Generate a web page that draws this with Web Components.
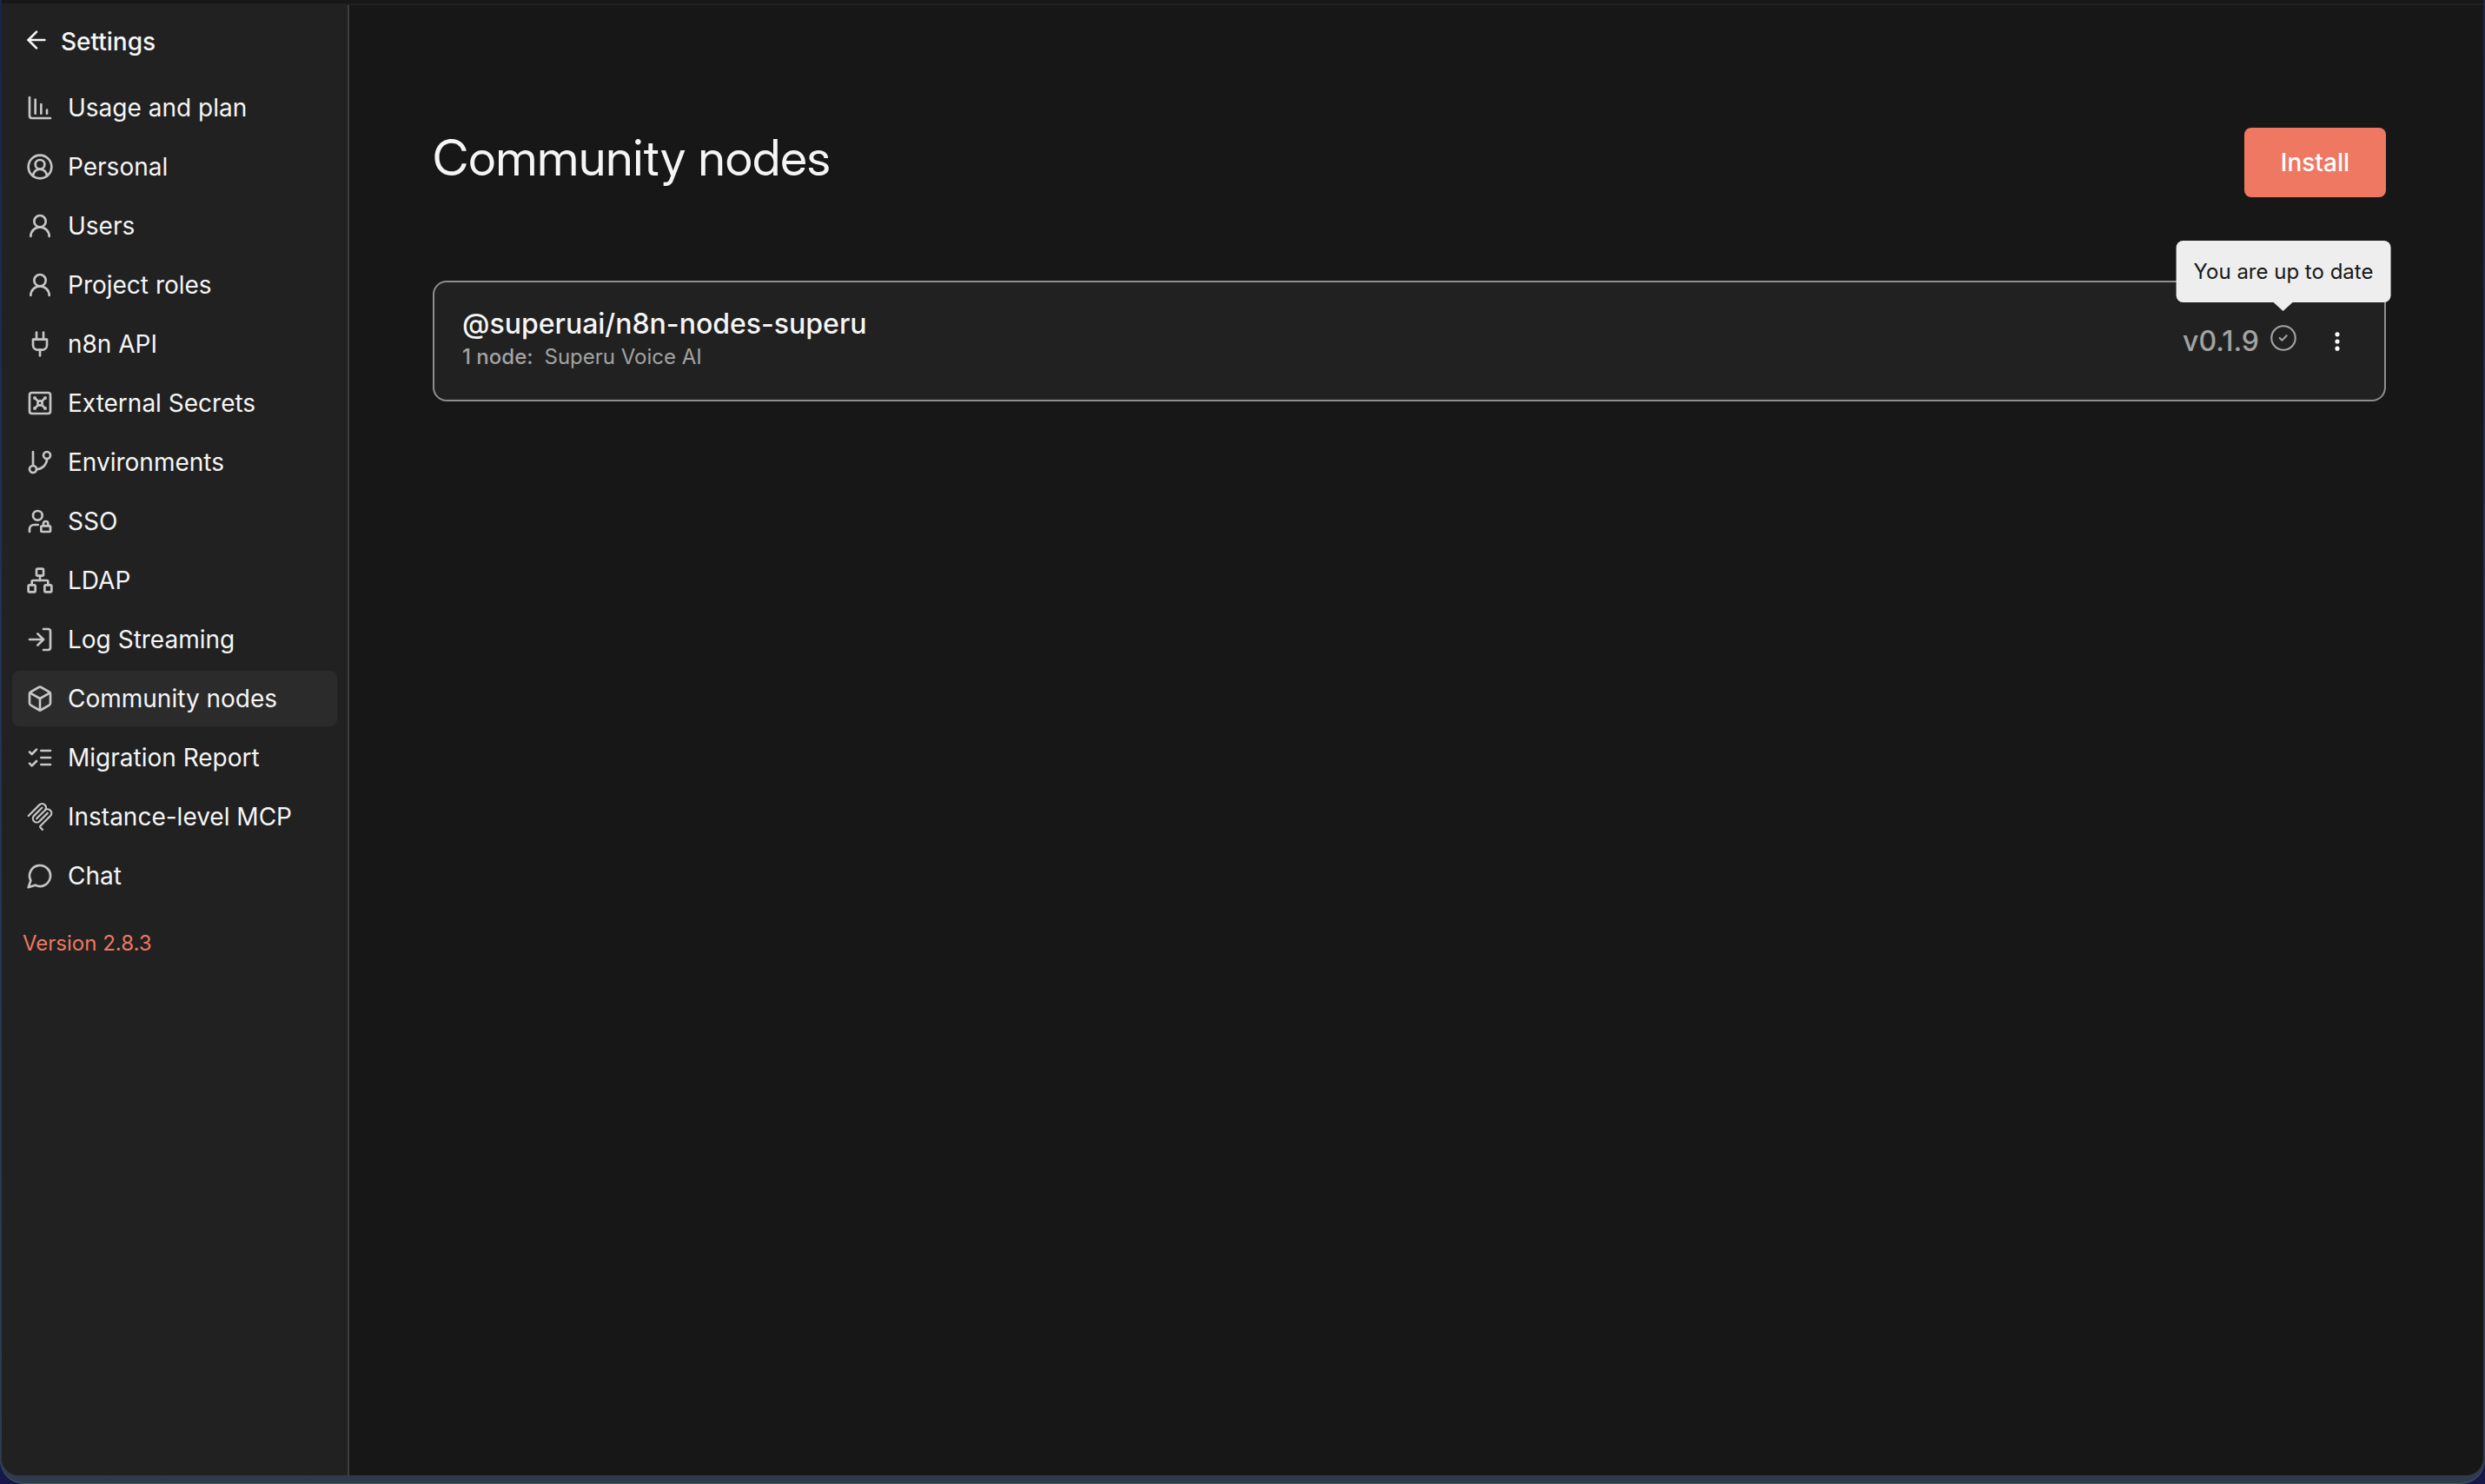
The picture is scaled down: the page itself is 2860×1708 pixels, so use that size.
<!DOCTYPE html>
<html lang="en">
<head>
<meta charset="utf-8">
<title>Community nodes - Settings</title>
<style>
  html, body { height: 100%; margin: 0; }
  body {
    background: #17184a;
    font-family: Inter, "Liberation Sans", sans-serif;
    font-size: 28px;
    line-height: 36px;
    color: #f5f5f5;
    --surface: #171717;
    --panel: #212121;
    --panel-active: #2b2b2b;
    --divider: #3e3e3e;
    --icon: #c6c6c6;
    --muted: #a3a3a3;
    --card-border: #8f8f8f;
    --accent: #ee7862;
    --tooltip: #eeeeee;
  }
</style>
</head>
<body>
<app-window>
  <settings-sidebar slot="sidebar"></settings-sidebar>
  <settings-page heading="Community nodes" action="Install">
    <package-card name="@superuai/n8n-nodes-superu" count="1 node:" version="v0.1.9" status="You are up to date">Superu Voice AI</package-card>
  </settings-page>
</app-window>

<script>
const ICONS = {
  back: '<path d="m12 19-7-7 7-7"/><path d="M19 12H5"/>',
  chart: '<path d="M13 17V9"/><path d="M18 17v-3"/><path d="M3 3v16a2 2 0 0 0 2 2h16"/><path d="M8 17V5"/>',
  account: '<path d="M18 20a6 6 0 0 0-12 0"/><circle cx="12" cy="10" r="4"/><circle cx="12" cy="12" r="10"/>',
  user: '<circle cx="12" cy="8" r="5"/><path d="M20 21a8 8 0 0 0-16 0"/>',
  plug: '<path d="M12 22v-5"/><path d="M9 8V2"/><path d="M15 8V2"/><path d="M18 8v5a4 4 0 0 1-4 4h-4a4 4 0 0 1-4-4V8Z"/>',
  vault: '<rect width="18" height="18" x="3" y="3" rx="2"/><circle cx="7.5" cy="7.5" r=".5" fill="currentColor"/><path d="m7.9 7.9 2.7 2.7"/><circle cx="16.5" cy="7.5" r=".5" fill="currentColor"/><path d="m13.4 10.6 2.7-2.7"/><circle cx="7.5" cy="16.5" r=".5" fill="currentColor"/><path d="m7.9 16.1 2.7-2.7"/><circle cx="16.5" cy="16.5" r=".5" fill="currentColor"/><path d="m13.4 13.4 2.7 2.7"/><circle cx="12" cy="12" r="2"/>',
  branch: '<path d="M6 3v12"/><circle cx="18" cy="6" r="3"/><circle cx="6" cy="18" r="3"/><path d="M18 9a9 9 0 0 1-9 9"/>',
  userlock: '<circle cx="10" cy="7" r="4"/><path d="M10.3 15H7a4 4 0 0 0-4 4v2"/><path d="M15 15.5V14a2 2 0 0 1 4 0v1.5"/><rect width="8" height="5" x="13" y="16" rx=".899"/>',
  network: '<rect x="16" y="16" width="6" height="6" rx="1"/><rect x="2" y="16" width="6" height="6" rx="1"/><rect x="9" y="2" width="6" height="6" rx="1"/><path d="M5 16v-3a1 1 0 0 1 1-1h12a1 1 0 0 1 1 1v3"/><path d="M12 12V8"/>',
  login: '<path d="m10 17 5-5-5-5"/><path d="M15 12H3"/><path d="M15 3h4a2 2 0 0 1 2 2v14a2 2 0 0 1-2 2h-4"/>',
  box: '<path d="M21 8a2 2 0 0 0-1-1.73l-7-4a2 2 0 0 0-2 0l-7 4A2 2 0 0 0 3 8v8a2 2 0 0 0 1 1.73l7 4a2 2 0 0 0 2 0l7-4A2 2 0 0 0 21 16Z"/><path d="m3.3 7 8.7 5 8.7-5"/><path d="M12 22V12"/>',
  checks: '<path d="m3 17 2 2 4-4"/><path d="m3 7 2 2 4-4"/><path d="M13 6h8"/><path d="M13 12h8"/><path d="M13 18h8"/>',
  mcp: '<path fill="currentColor" stroke="none" d="M13.85 0a4.16 4.16 0 0 0-2.95 1.217L1.456 10.66a.835.835 0 0 0 0 1.18.835.835 0 0 0 1.18 0l9.442-9.442a2.49 2.49 0 0 1 3.541 0 2.49 2.49 0 0 1 0 3.541L8.59 12.97l-.1.1a.835.835 0 0 0 0 1.18.835.835 0 0 0 1.18 0l.1-.098 7.03-7.034a2.49 2.49 0 0 1 3.542 0l.049.05a2.49 2.49 0 0 1 0 3.54l-8.54 8.54a1.96 1.96 0 0 0 0 2.755l1.753 1.753a.835.835 0 0 0 1.18 0 .835.835 0 0 0 0-1.18l-1.753-1.753a.266.266 0 0 1 0-.394l8.54-8.54a4.185 4.185 0 0 0 0-5.9l-.05-.05a4.16 4.16 0 0 0-2.95-1.218c-.2 0-.401.02-.6.048a4.17 4.17 0 0 0-1.17-3.552A4.16 4.16 0 0 0 13.85 0m0 3.333a.84.84 0 0 0-.59.245L6.275 10.56a4.186 4.186 0 0 0 0 5.902 4.186 4.186 0 0 0 5.902 0L19.16 9.48a.835.835 0 0 0 0-1.18.835.835 0 0 0-1.18 0l-6.985 6.984a2.49 2.49 0 0 1-3.54 0 2.49 2.49 0 0 1 0-3.54l6.983-6.985a.835.835 0 0 0 0-1.18.84.84 0 0 0-.59-.245"/>',
  chat: '<path d="M7.9 20A9 9 0 1 0 4 16.1L2 22Z"/>',
  check: '<g stroke-width="1.6"><circle cx="12" cy="12" r="10.3"/><path d="m8.8 12 2 2 4-4"/></g>',
  more: '<circle cx="12" cy="12" r="1.2"/><circle cx="12" cy="5" r="1.2"/><circle cx="12" cy="19" r="1.2"/>'
};

class Base extends HTMLElement {
  connectedCallback() {
    if (!this.shadowRoot) this.attachShadow({ mode: 'open' }).innerHTML = this.render();
  }
}

customElements.define('ui-icon', class extends Base {
  render() {
    return `<style>
      :host { display: block; flex: none; width: 32px; height: 32px; }
      svg { display: block; width: 100%; height: 100%; overflow: visible; }
    </style>
    <svg viewBox="0 0 24 24" fill="none" stroke="currentColor" stroke-width="2" stroke-linecap="round" stroke-linejoin="round" aria-hidden="true">${ICONS[this.getAttribute('name')]}</svg>`;
  }
});

customElements.define('app-window', class extends Base {
  render() {
    return `<style>
      :host {
        display: flex; box-sizing: border-box; min-height: 100%;
        padding: 0 2px 10px;
        background: linear-gradient(#1b2350, #22305a 40%, #2a3a50 85%, #2e3b4b);
        border-radius: 0 0 28px 28px;
        box-shadow: inset 0 -1px 0 #4a5868;
      }
      .screen {
        flex: 1; display: flex; flex-direction: column; overflow: hidden;
        background: var(--surface); border-radius: 0 0 20px 20px;
      }
      .top { height: 4px; border-bottom: 2px solid var(--panel); }
      .body { flex: 1; display: flex; }
    </style>
    <div class="screen">
      <div class="top"></div>
      <div class="body"><slot name="sidebar"></slot><slot></slot></div>
    </div>`;
  }
});

customElements.define('nav-item', class extends Base {
  render() {
    return `<style>
      :host { display: block; }
      a {
        display: flex; align-items: center; gap: 16px; height: 64px; padding: 0 16px;
        border-radius: 8px; color: inherit; text-decoration: none; white-space: nowrap;
      }
      :host([active]) a { background: var(--panel-active); }
      ui-icon { color: var(--icon); }
    </style>
    <a href="#"${this.hasAttribute('active') ? ' aria-current="page"' : ''}><ui-icon name="${this.getAttribute('icon')}"></ui-icon><span><slot></slot></span></a>`;
  }
});

customElements.define('settings-sidebar', class extends Base {
  render() {
    const items = [
      ['chart', 'Usage and plan'], ['account', 'Personal'], ['user', 'Users'],
      ['user', 'Project roles'], ['plug', 'n8n API'], ['vault', 'External Secrets'],
      ['branch', 'Environments'], ['userlock', 'SSO'], ['network', 'LDAP'],
      ['login', 'Log Streaming'], ['box', 'Community nodes', true],
      ['checks', 'Migration Report'], ['mcp', 'Instance-level MCP'], ['chat', 'Chat']
    ];
    return `<style>
      :host {
        display: flex; flex-direction: column; flex: none; box-sizing: border-box; width: 400px;
        background: var(--panel); border-right: 2px solid var(--divider);
      }
      .back {
        display: flex; align-items: flex-start; gap: 12px; padding: 24px 24px 26px;
        color: inherit; text-decoration: none; font-weight: 500;
      }
      ul { list-style: none; margin: 0; padding: 0 12px; display: flex; flex-direction: column; gap: 4px; }
      .version { padding: 28px 24px; font-size: 24px; color: var(--accent); text-decoration: none; }
    </style>
    <a class="back" href="#"><ui-icon name="back"></ui-icon><span>Settings</span></a>
    <nav aria-label="Settings"><ul>${items.map(([icon, text, on]) =>
      `<li><nav-item icon="${icon}"${on ? ' active' : ''}>${text}</nav-item></li>`).join('')}</ul></nav>
    <a class="version" href="#">Version 2.8.3</a>`;
  }
});

customElements.define('settings-page', class extends Base {
  render() {
    return `<style>
      :host { display: block; flex: 1; min-width: 0; padding: 141px 112px 96px 96px; }
      header { display: flex; justify-content: space-between; align-items: flex-start; margin-bottom: 96px; }
      h1 { margin: 0; font-family: "Inter Display", Inter, "Liberation Sans", sans-serif; font-size: 57px; line-height: 70px; font-weight: 400; }
      button {
        height: 80px; padding: 0 42px; border: 0; border-radius: 8px;
        background: var(--accent); color: #fff; font: inherit; font-weight: 500;
      }
    </style>
    <main>
      <header><h1>${this.getAttribute('heading')}</h1><button type="button">${this.getAttribute('action')}</button></header>
      <slot></slot>
    </main>`;
  }
});

customElements.define('tool-tip', class extends Base {
  render() {
    return `<style>
      :host { display: block; position: relative; color: var(--muted); }
      .bubble {
        position: absolute; bottom: 100%; left: 50%; transform: translateX(-50%); margin-bottom: 25px;
        padding: 18px 20px; border-radius: 8px; background: var(--tooltip); color: #171717;
        font-size: 24px; line-height: 35px; white-space: nowrap;
      }
      .bubble::after {
        content: ""; position: absolute; top: 100%; left: 50%; margin-left: -11px;
        border: 11px solid transparent; border-top: 10px solid var(--tooltip); border-bottom: 0;
      }
    </style>
    <slot></slot><div class="bubble" role="tooltip">${this.getAttribute('text')}</div>`;
  }
});

customElements.define('package-card', class extends Base {
  render() {
    const a = n => this.getAttribute(n);
    return `<style>
      :host {
        display: flex; align-items: center; justify-content: space-between;
        padding: 28px 40px 32px 32px;
        border: 2px solid var(--card-border); border-radius: 16px; background: var(--panel);
      }
      h2 { margin: 0; font-size: 32px; line-height: 40px; font-weight: 500; }
      p { display: flex; gap: 13px; margin: 0; font-size: 24px; line-height: 35px; color: var(--muted); }
      b { font-weight: 500; }
      .side { display: flex; align-items: center; }
      .version { margin-right: 12px; padding-top: 4px; font-size: 32px; line-height: 40px; font-weight: 500; color: var(--muted); }
      tool-tip { margin-bottom: 4px; }
      button { margin-left: 32px; padding: 4px 0 0; border: 0; background: none; color: #fff; }
      button ui-icon { width: 28px; height: 28px; }
    </style>
    <div><h2>${a('name')}</h2><p><b>${a('count')}</b><span><slot></slot></span></p></div>
    <div class="side">
      <span class="version">${a('version')}</span>
      <tool-tip text="${a('status')}"><ui-icon name="check"></ui-icon></tool-tip>
      <button type="button" aria-label="Package actions"><ui-icon name="more"></ui-icon></button>
    </div>`;
  }
});
</script>
</body>
</html>
